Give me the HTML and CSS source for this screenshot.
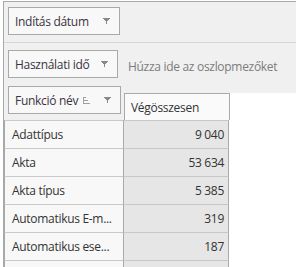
FILE: index.html
```html
<!DOCTYPE html>
<html>
<head>
<meta charset="utf-8">
<link rel="stylesheet" href="styles.css">
</head>
<body>
<div class="pivot">
  <div class="zone filter-zone">
    <div class="field w112"><span class="label">Indítás dátum</span><span class="icons"><svg class="funnel" width="7" height="7" viewBox="0 0 7 7" shape-rendering="crispEdges"><rect x="0" y="0" width="7" height="1"/><rect x="1" y="1" width="5" height="1"/><rect x="2" y="2" width="3" height="1"/><rect x="3" y="3" width="1" height="3"/></svg></span></div>
  </div>
  <div class="zone col-zone">
    <div class="field w110"><span class="label">Használati idő</span><span class="icons"><svg class="funnel" width="7" height="7" viewBox="0 0 7 7" shape-rendering="crispEdges"><rect x="0" y="0" width="7" height="1"/><rect x="1" y="1" width="5" height="1"/><rect x="2" y="2" width="3" height="1"/><rect x="3" y="3" width="1" height="3"/></svg></span></div>
    <span class="hint">Húzza ide az oszlopmezőket</span>
  </div>
  <div class="head-row">
    <div class="row-pane">
      <div class="field w113"><span class="label">Funkció név</span><span class="icons"><svg class="sort" width="7" height="7" viewBox="0 0 7 7" shape-rendering="crispEdges"><rect x="0" y="0" width="1" height="7"/><rect x="1" y="0" width="2" height="1"/><rect x="1" y="3" width="4" height="1"/><rect x="1" y="6" width="6" height="1"/></svg><svg class="funnel" width="7" height="7" viewBox="0 0 7 7" shape-rendering="crispEdges"><rect x="0" y="0" width="7" height="1"/><rect x="1" y="1" width="5" height="1"/><rect x="2" y="2" width="3" height="1"/><rect x="3" y="3" width="1" height="3"/></svg></span></div>
    </div>
    <div class="col-pane">
      <div class="strip"></div>
      <div class="total-head">Végösszesen</div>
    </div>
  </div>
  <div class="grid">
    <div class="name">Adattípus</div><div class="val">9 040</div>
    <div class="name">Akta</div><div class="val">53 634</div>
    <div class="name">Akta típus</div><div class="val">5 385</div>
    <div class="name">Automatikus E-m...</div><div class="val">319</div>
    <div class="name">Automatikus ese...</div><div class="val">187</div>
    <div class="name"></div><div class="val"></div>
  </div>
</div>
</body>
</html>
```
FILE: styles.css
```css
html, body {
  margin: 0;
  padding: 0;
  background: #ffffff;
  overflow: hidden;
}
body {
  font-family: "Open Sans", "Noto Sans", sans-serif;
  font-size: 12px;
  letter-spacing: -0.3px;
  color: #333333;
  width: 296px;
  height: 267px;
}
.pivot {
  margin: 1px 0 0 3px;
  height: 265px;
  overflow: hidden;
  border-top: 1px solid #a8a8a8;
  border-left: 1px solid #a8a8a8;
}
.zone {
  background: #f0f0f0;
  display: flex;
  padding-left: 4px;
}
.filter-zone {
  padding-top: 5px;
  padding-bottom: 7px;
  border-bottom: 1px solid #d6d6d6;
}
.col-zone {
  padding-top: 7px;
  align-items: flex-end;
}
.field {
  box-sizing: border-box;
  height: 28px;
  border: 1px solid #a9a9a9;
  background: #f8f8f8;
  display: flex;
  align-items: center;
  justify-content: space-between;
  padding: 0 9px 0 6px;
  color: #3a3340;
  white-space: nowrap;
}
.label {
  white-space: nowrap;
}
.w112 { width: 112px; }
.w110 { width: 110px; }
.w113 { width: 113px; }
.icons {
  display: flex;
  align-items: center;
  gap: 14px;
  flex-shrink: 0;
}
.funnel { fill: #888888; display: block; }
.sort { fill: #a0a0a0; display: block; }
.hint {
  color: #7c7c7c;
  margin-left: 10px;
  margin-bottom: 3px;
  line-height: 17px;
  white-space: nowrap;
}
.head-row {
  display: flex;
}
.row-pane {
  width: 120px;
  background: #f0f0f0;
  padding: 8px 0 6px 4px;
  box-sizing: border-box;
}
.col-pane {
  flex: 1;
  display: flex;
  flex-direction: column;
}
.strip {
  height: 15px;
  background: #f0f0f0;
}
.total-head {
  box-sizing: border-box;
  width: 106px;
  height: 27px;
  border: 1px solid #a9a9a9;
  border-bottom: none;
  background: #fafafa;
  padding-left: 6px;
  display: flex;
  align-items: center;
}
.grid {
  display: grid;
  grid-template-columns: 120px 105px;
  grid-auto-rows: 28px;
}
.name, .val {
  box-sizing: border-box;
  border-top: 1px solid #c8c8c8;
  display: flex;
  align-items: center;
}
.name {
  background: #f8f8f8;
  border-left: 1px solid #a9a9a9;
  border-right: 1px solid #a9a9a9;
  padding-left: 7px;
  white-space: nowrap;
}
.val {
  background: #e6e6e6;
  border-right: 1px solid #a9a9a9;
  justify-content: flex-end;
  padding-right: 4px;
}
```
